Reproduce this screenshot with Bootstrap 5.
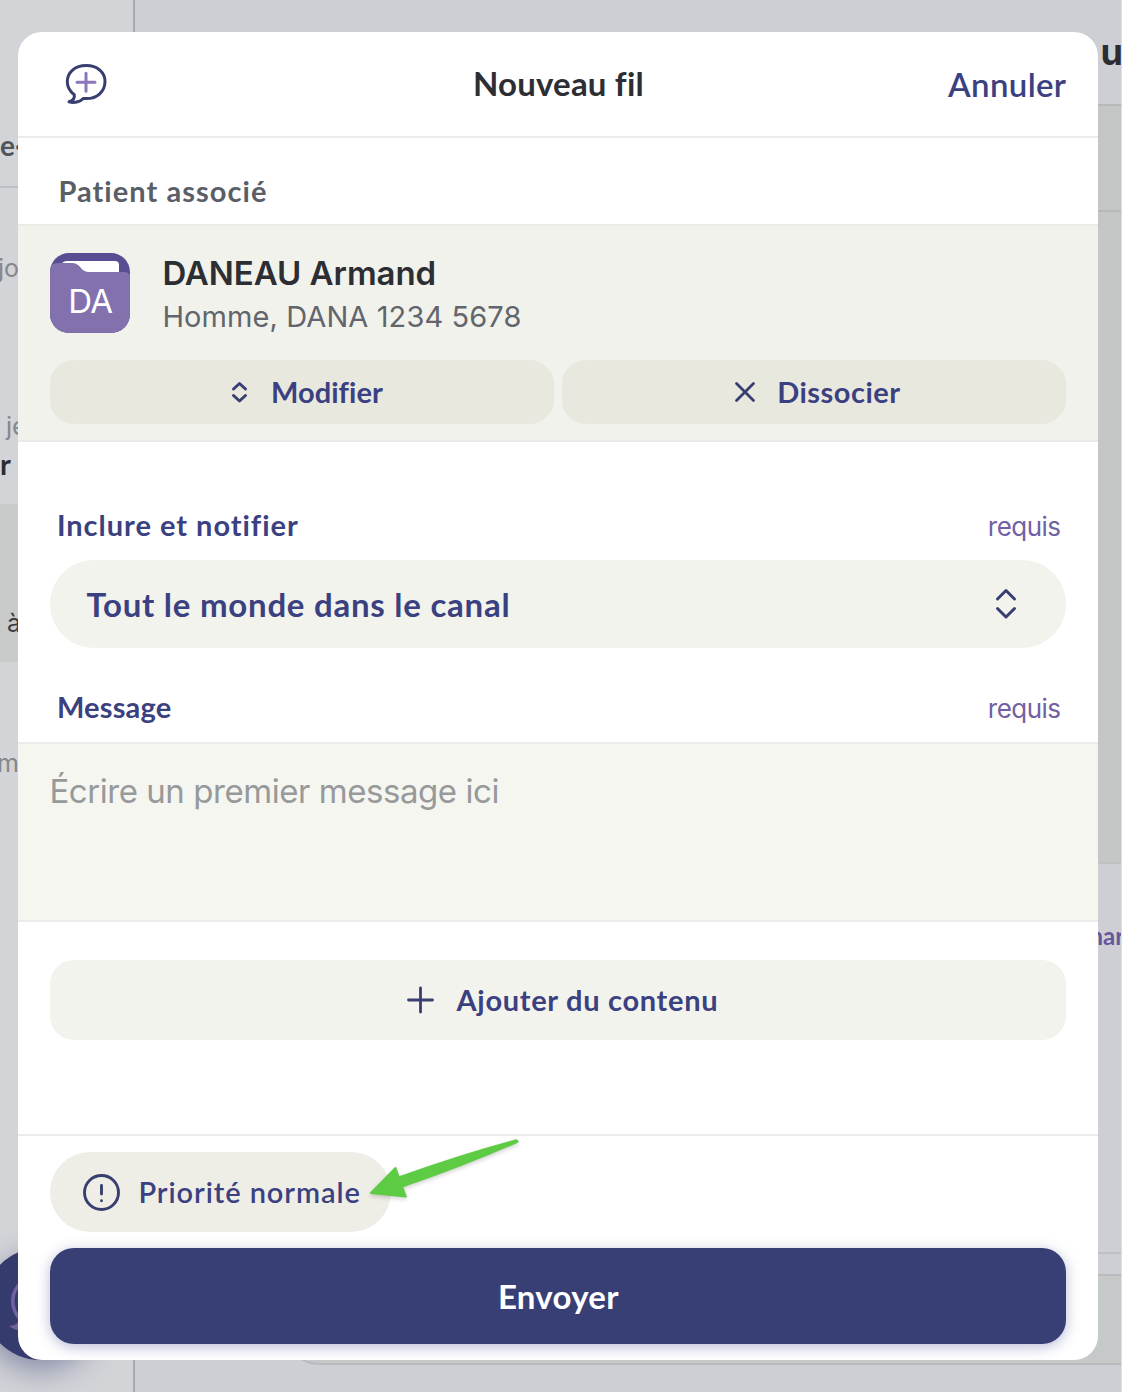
<!DOCTYPE html>
<html lang="fr">
<head>
<meta charset="utf-8">
<meta name="viewport" content="width=device-width, initial-scale=1">
<title>Nouveau fil</title>
<link href="https://cdn.jsdelivr.net/npm/bootstrap@5.3.0/dist/css/bootstrap.min.css" rel="stylesheet">
<style>
  :root { --ink: #3b4180; --ui: Lato, "Open Sans", sans-serif; --txt: Inter, "Noto Sans", sans-serif; }
  body { margin: 0; background: #cecfd5; font-family: var(--ui); color: #2d2e33; }
  svg { display: block; flex: none; overflow: visible; }
  .stage { position: relative; width: 1122px; height: 1392px; overflow: hidden; border-right: 1px solid #dedee2; }
  .ln { line-height: 40px; height: 40px; white-space: nowrap; }

  /* page behind the dialog */
  .side { width: 134.500px; background: #d3d4d8; border-right: 2px solid #a9aaaf; overflow: hidden; }
  .side-head { height: 188px; padding-top: 125px; border-bottom: 2px solid #bebfc4; font: 700 28px var(--ui); color: #50545b; }
  .side-day { height: 218px; padding-top: 60px; font: 400 25px var(--txt); color: #85878c; }
  .side-day .ln { margin-left: -2px; }
  .side-item { height: 98px; font: 400 25px var(--txt); color: #85878c; }
  .side-item .abr { padding-left: 6px; }
  .side-item .who { font: 700 29px var(--ui); line-height: 40px; color: #2b2d33; margin-top: -2px; }
  .side-on { height: 158px; background: #c9cbca; padding: 99px 0 0 7px; font: 400 25px var(--txt); color: #3b3d42; }
  .side-next { padding-top: 81px; font: 400 25px var(--txt); color: #85878c; }
  .side-next .ln { margin-left: -3px; }
  .side .ln { line-height: 40px; }
  .main-head { height: 106px; border-bottom: 2px solid #b7b8bb; padding: 32px 0 0 966px; font: 700 36px var(--txt); color: #2b2d33; }
  .main-card { background: #c5c7c6; height: 106px; border-bottom: 2px solid #b7b9b9; }
  .main-body { background: #c5c7c6; height: 652px; border-bottom: 2px solid #c0c1c5; }
  .main-feed { height: 390px; border-bottom: 2px solid #bfc0c5; padding: 52px 0 0 955px; font: 700 24px var(--ui); color: #66569c; }
  .composer { height: 91px; margin: 20px 0 0 150px; background: #c5c9ca; border: solid #b9bbbf; border-width: 2px 0; border-bottom-left-radius: 34px; }
  .fab { position: absolute; left: -16px; top: 1248px; width: 112px; height: 112px; background: #353b6c; box-shadow: 0 10px 30px rgba(56,63,117,.5); }

  /* dialog */
  .sheet { position: absolute; left: 18.4px; top: 32px; width: 1080px; height: 1328px; border-radius: 24px; overflow: hidden; background: #fff; }
  .sheet-head { height: 106px; border-bottom: 2px solid #ebebea; padding: 0 32px; }
  .sheet-head .side-slot { width: 240px; }
  .sheet-title { font: 700 33px/40px var(--ui); letter-spacing: .2px; padding-bottom: 3px; }
  .cancel { font: 600 33px/40px var(--ui); letter-spacing: .35px; color: var(--ink); text-decoration: none; }
  .linked { height: 86px; padding: 20px 40px 0; font: 700 29px/36px var(--ui); letter-spacing: 1.05px; color: #5a5e66; }
  .patient { height: 218px; background: #f1f2ec; border: solid #eaebe7; border-width: 2px 0; padding: 27px 32px 16px; }
  .avatar { position: relative; width: 80px; height: 80px; }
  .avatar b { position: absolute; inset: 28px 0 auto; text-align: center; font: 400 33px/40px var(--txt); letter-spacing: -.5px; color: #fff; }
  .p-name { font: 600 33px/40px var(--txt); letter-spacing: -.05px; }
  .p-info { font: 400 29px/43px var(--txt); letter-spacing: .1px; color: #62656b; margin-top: 2px; }
  .soft { border: 0; border-radius: 24px; color: var(--ink); font: 700 29px/36px var(--ui); white-space: nowrap; padding: 0; }
  .soft-dark { background: #e8e8df; height: 64px; }
  .soft-dark.edit { letter-spacing: .05px; }
  .soft-dark.unlink { letter-spacing: .5px; }
  .soft-light { background: #f2f3ed; height: 80px; margin: 38px 32px 0; letter-spacing: .7px; }
  .gap-ico { gap: 15px; }
  .lab { padding: 0 38px 17px 38.5px; font: 700 29px/36px var(--ui); color: var(--ink); }
  .need { font: 400 26px/36px var(--txt); letter-spacing: -.55px; color: #7260a4; position: relative; top: 2px; }
  .lab-1 { height: 118px; letter-spacing: .98px; }
  .lab-2 { height: 94px; letter-spacing: .2px; }
  .pick { height: 88px; margin: 0 32px; padding: 0 49px 0 36px; background: #f2f3ed; color: var(--ink); font: 700 33px/40px var(--ui); letter-spacing: .75px; }
  .msg { height: 180px; border: solid #ebebe7; border-width: 2px 0; border-radius: 0; background: #f5f6f0; padding: 27px 31px; font: 400 33px/40px var(--txt); letter-spacing: -.45px; resize: none; display: block; width: 100%; }
  .msg::placeholder { color: #97999b; opacity: 1; }
  .foot { height: 226px; border-top: 2px solid #ebebea; padding: 16px 32px; gap: 16px; }
  .prio { background: #eeeee7; height: 80px; width: 341px; padding-left: 33px; gap: 18px; letter-spacing: .93px; font-weight: 600; border-radius: 40px; }
  .send, .send:hover { height: 96px; border: 0; border-radius: 24px; background: #383f75; color: #fff; font: 700 33px/40px var(--ui); letter-spacing: .3px; box-shadow: 0 3px 14px rgba(56,63,140,.35); }
  .pointer { position: absolute; left: 360px; top: 1125px; filter: drop-shadow(0 2px 2px rgba(0,0,0,.18)); }
</style>
</head>
<body>
<div class="stage">
  <div class="d-flex h-100">
    <aside class="side flex-shrink-0">
      <div class="side-head"><div class="ln">e·</div></div>
      <div class="side-day"><div class="ln">jo</div></div>
      <div class="side-item"><div class="ln abr">je</div><div class="ln who">r</div></div>
      <div class="side-on"><div class="ln">à</div></div>
      <div class="side-next"><div class="ln">m</div></div>
    </aside>
    <main class="flex-grow-1 overflow-hidden">
      <div class="main-head"><div class="ln">u</div></div>
      <div class="main-card"></div>
      <div class="main-body"></div>
      <div class="main-feed"><div class="ln">nar</div></div>
      <div class="composer"></div>
    </main>
  </div>

  <div class="fab rounded-circle">
    <svg width="112" height="112" fill="none" stroke="#7260a4" stroke-width="3.5" stroke-linecap="round"><path d="M36 71C26 60 26 44 38 34M36 71q0 7-6 8q5 3 14-1"/></svg>
  </div>

  <section class="sheet d-flex flex-column">
    <header class="sheet-head d-flex align-items-center justify-content-between">
      <div class="side-slot">
        <svg width="72" height="70" viewBox="0 -1 72 70" fill="none" stroke-width="3" stroke-linecap="round" stroke-linejoin="round">
          <path stroke="#383f70" d="M24.300 44.800C20 41.500 17.300 37 17.300 31.800C17.300 22 25 15.600 36.200 15.600C47.500 15.600 55 22.300 55 31.500C55 41.500 47 48.600 36.500 48.600L33.300 48.400C30 52 24 53.200 19 51.800C23.500 50.500 25 48.500 24.300 44.800Z"/>
          <path stroke="#8a76b8" d="M27 32.300h18M36 23.300v18"/>
        </svg>
      </div>
      <div class="sheet-title">Nouveau fil</div>
      <div class="side-slot text-end"><a class="cancel" href="#">Annuler</a></div>
    </header>

    <div class="linked d-flex align-items-center">Patient associé</div>
    <div class="patient d-flex flex-column justify-content-between">
      <div class="d-flex">
        <div class="avatar">
          <svg width="80" height="80" viewBox="0 0 80 80">
            <clipPath id="tile"><rect width="80" height="80" rx="19"/></clipPath>
            <g clip-path="url(#tile)">
              <rect width="80" height="80" fill="#5a4e93"/>
              <path fill="#fff" d="M12 10q2-2 5-2h48q4 0 4 4v10H30z"/>
              <path fill="#8371ae" d="M0 15q2-5 8-5h14q5 0 9 5q3 4 8 4h35q4 0 6 3v58H0z"/>
            </g>
          </svg>
          <b>DA</b>
        </div>
        <div class="ms-4 ps-2">
          <div class="p-name">DANEAU Armand</div>
          <div class="p-info">Homme, DANA 1234 5678</div>
        </div>
      </div>
      <div class="d-flex gap-2">
        <button class="soft soft-dark edit flex-fill w-50 d-flex align-items-center justify-content-center gap-ico">
          <svg width="34" height="24" fill="none" stroke="#383f70" stroke-width="3" stroke-linecap="round" stroke-linejoin="round"><path d="M11.500 9L17.500 3.500L23.500 9M11.500 15.500L17.500 21L23.500 15.500"/></svg>
          <span>Modifier</span>
        </button>
        <button class="soft soft-dark unlink flex-fill w-50 d-flex align-items-center justify-content-center gap-ico">
          <svg width="34" height="24" fill="none" stroke="#383f70" stroke-width="2.8" stroke-linecap="round"><path d="M8.500 3.500l17 17M25.500 3.500l-17 17"/></svg>
          <span>Dissocier</span>
        </button>
      </div>
    </div>

    <div class="lab lab-1 d-flex align-items-end justify-content-between"><span>Inclure et notifier</span><span class="need">requis</span></div>
    <div class="pick rounded-pill d-flex align-items-center justify-content-between">
      <span>Tout le monde dans le canal</span>
      <svg width="22" height="32" fill="none" stroke="#383f70" stroke-width="3" stroke-linecap="round" stroke-linejoin="round"><path d="M2.500 11L11 2.500L19.500 11M2.500 20.500L11 29L19.500 20.500"/></svg>
    </div>
    <div class="lab lab-2 d-flex align-items-end justify-content-between"><span>Message</span><span class="need">requis</span></div>
    <textarea class="msg" placeholder="Écrire un premier message ici"></textarea>
    <button class="soft soft-light d-flex align-items-center justify-content-center gap-ico">
      <svg width="43" height="28" fill="none" stroke="#383f70" stroke-width="2.800" stroke-linecap="round"><path d="M9.500 14h24M21.500 2v24"/></svg>
      <span>Ajouter du contenu</span>
    </button>

    <footer class="foot mt-auto d-flex flex-column">
      <button class="soft prio d-flex align-items-center">
        <svg width="37" height="37" fill="none" stroke="#383f70" stroke-width="2.900" stroke-linecap="round"><circle cx="18.500" cy="18.500" r="17"/><path d="M18.500 11.500v8.500M18.500 26.700v.1"/></svg>
        <span>Priorité normale</span>
      </button>
      <button class="btn send w-100">Envoyer</button>
    </footer>
  </section>

  <svg class="pointer" width="170" height="85"><path fill="#5ecb44" stroke="#5ecb44" stroke-width="2" stroke-linejoin="round" d="M11 68L35.500 43L38.800 52.500Q98 31 156.500 15.200L157.500 16.800Q100 42 42 61.500L45.800 71.500Z"/></svg>
</div>
<script src="https://cdn.jsdelivr.net/npm/bootstrap@5.3.0/dist/js/bootstrap.bundle.min.js"></script>
</body>
</html>
